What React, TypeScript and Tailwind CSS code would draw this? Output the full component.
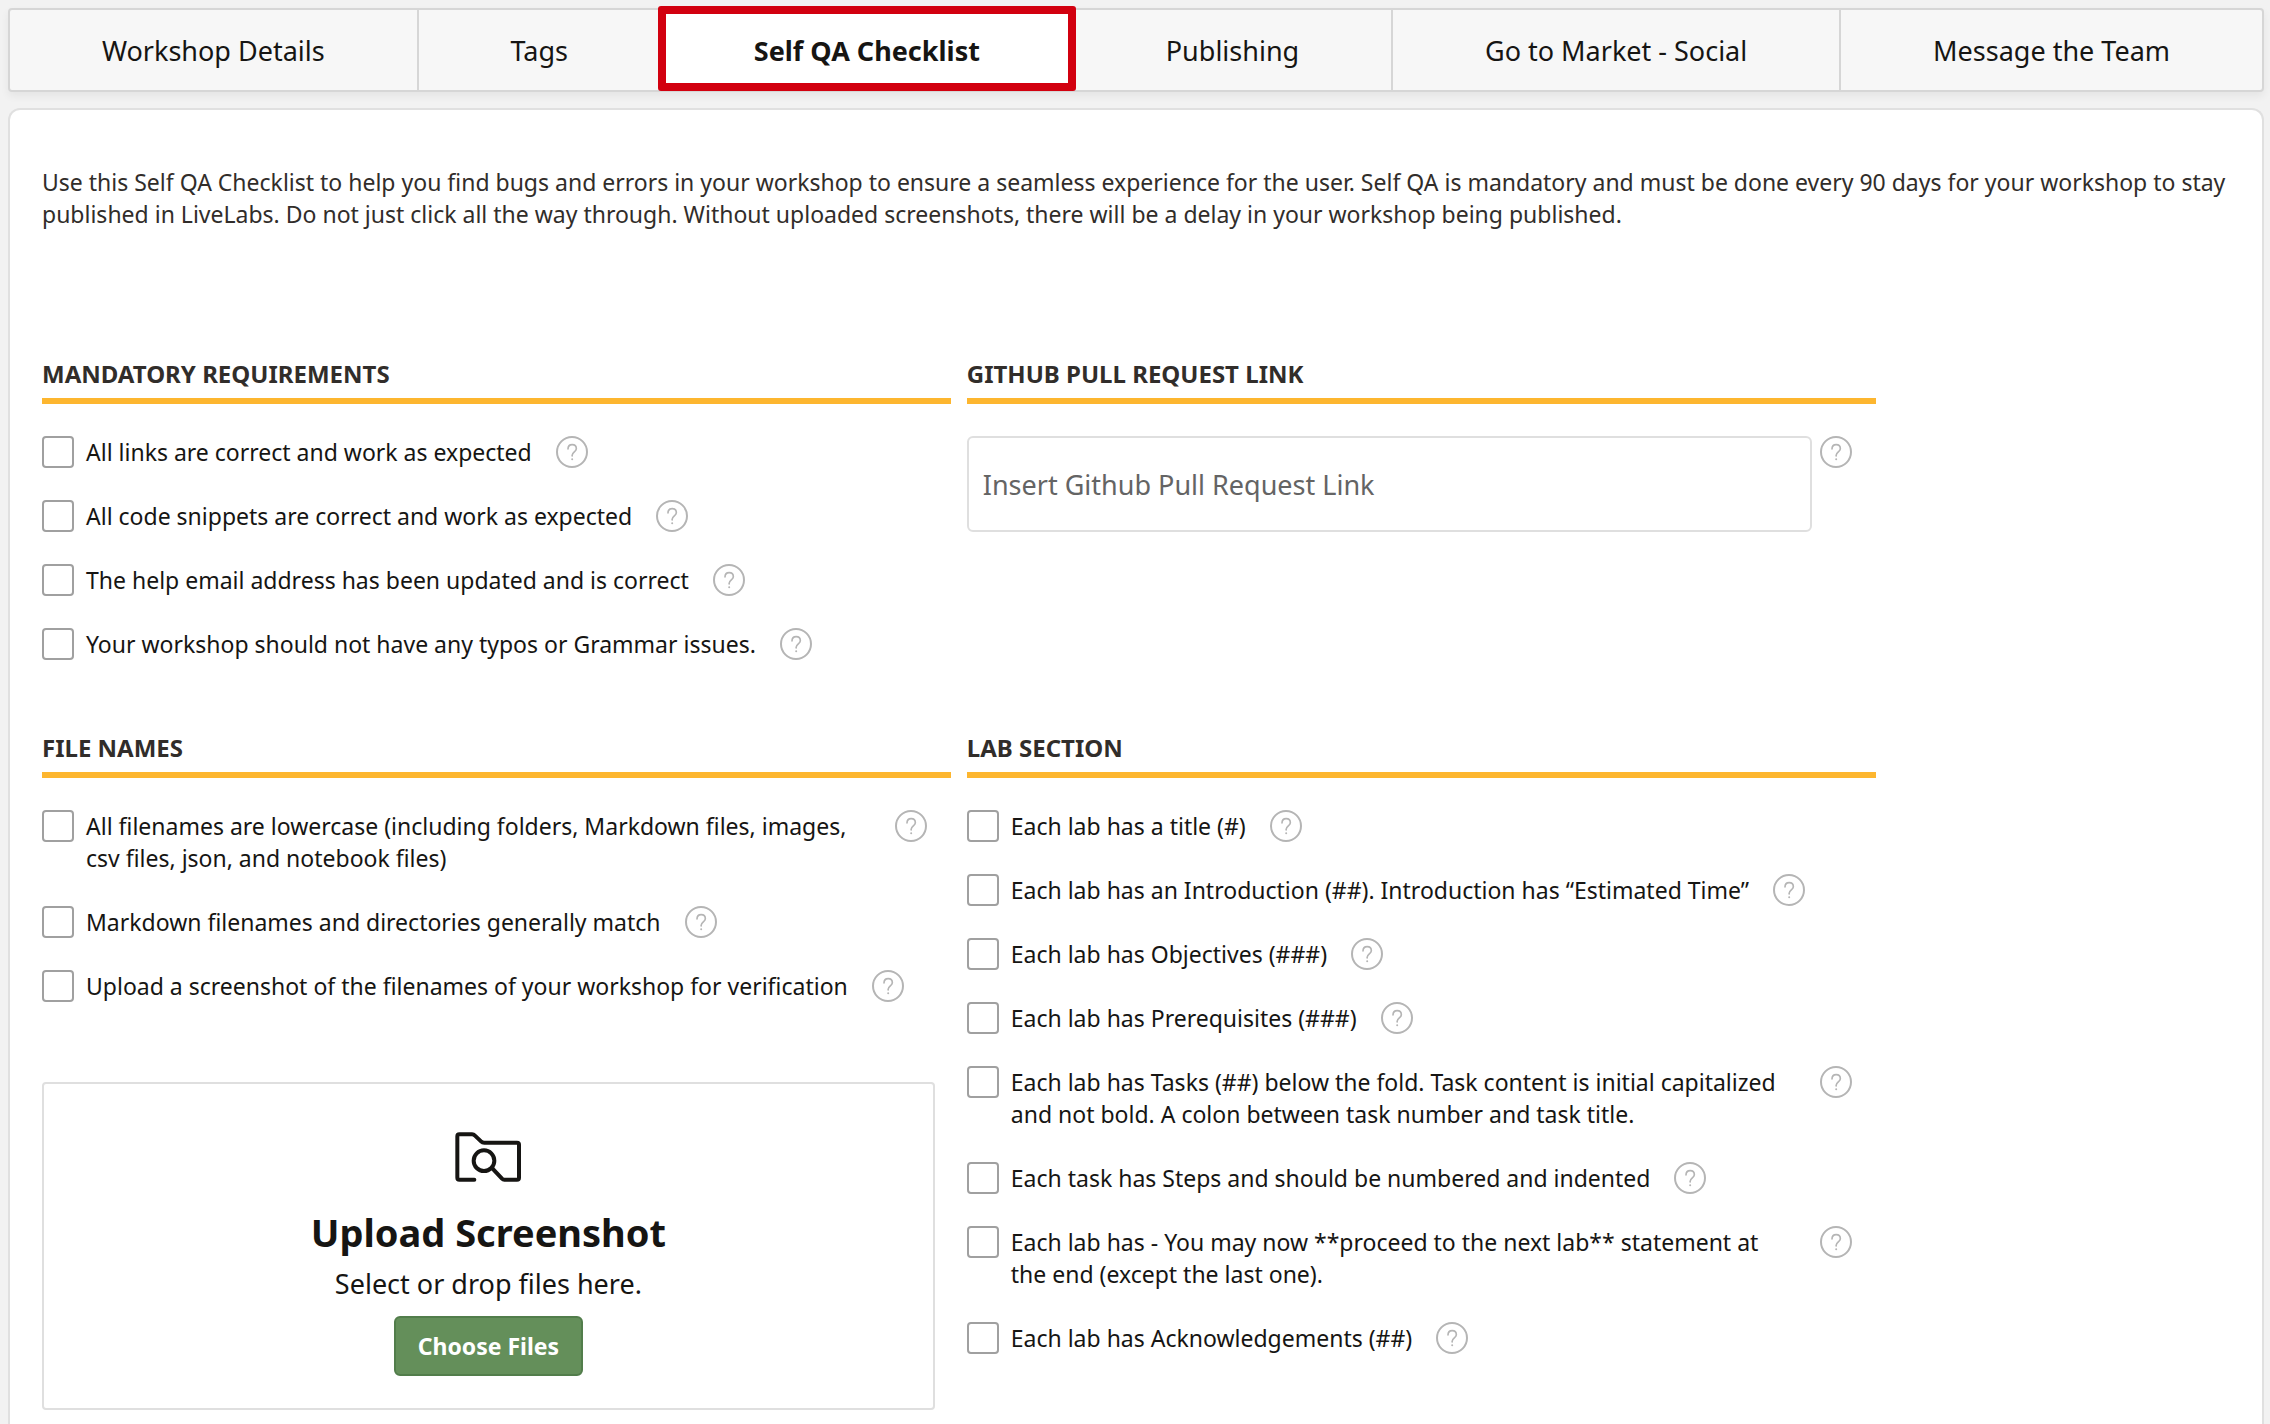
import React, { useId, useState } from "react";

const tabs = [
  "Workshop Details",
  "Tags",
  "Self QA Checklist",
  "Publishing",
  "Go to Market - Social",
  "Message the Team",
];

const mandatory = [
  "All links are correct and work as expected",
  "All code snippets are correct and work as expected",
  "The help email address has been updated and is correct",
  "Your workshop should not have any typos or Grammar issues.",
];

const fileNames = [
  "All filenames are lowercase (including folders, Markdown files, images, csv files, json, and notebook files)",
  "Markdown filenames and directories generally match",
  "Upload a screenshot of the filenames of your workshop for verification",
];

const labSection = [
  "Each lab has a title (#)",
  "Each lab has an Introduction (##). Introduction has “Estimated Time”",
  "Each lab has Objectives (###)",
  "Each lab has Prerequisites (###)",
  "Each lab has Tasks (##) below the fold. Task content is initial capitalized and not bold. A colon between task number and task title.",
  "Each task has Steps and should be numbered and indented",
  "Each lab has - You may now **proceed to the next lab** statement at the end (except the last one).",
  "Each lab has Acknowledgements (##)",
];

function HelpButton({ topic }: { topic: string }) {
  return (
    <button type="button" aria-label={`Help: ${topic}`} className="size-8 shrink-0 text-[#b5b5b5]">
      <svg viewBox="50 33 96 96" className="size-8" fill="none" stroke="currentColor" aria-hidden="true">
        <circle cx="98" cy="81" r="45" strokeWidth="6" />
        <path
          d="M86 72C86 64 91 59 98.500 59C106 59 111 64 111 71C111 80 98.500 81 98.500 91V93"
          strokeWidth="5"
          strokeLinecap="round"
        />
        <circle cx="98.500" cy="103" r="3" fill="currentColor" stroke="none" />
      </svg>
    </button>
  );
}

function FolderSearchIcon() {
  return (
    <svg
      viewBox="48 36 198 150"
      className="h-[50px] w-[66px]"
      fill="none"
      stroke="currentColor"
      strokeWidth="12"
      strokeLinecap="round"
      strokeLinejoin="round"
      aria-hidden="true"
    >
      <path d="M106 179H61Q55 179 55 173V49Q55 43 61 43H99Q104 43 108 47L126 64Q130 68 136 68H234Q240 68 240 74V173Q240 179 234 179H196Q192 179 189 176L160 145" />
      <circle cx="135" cy="122" r="31" />
    </svg>
  );
}

function CheckItem({ label }: { label: string }) {
  const id = useId();
  return (
    <li className="flex items-start pr-6">
      <input
        id={id}
        type="checkbox"
        className="mr-3 size-8 shrink-0 appearance-none rounded border-2 border-[#a0a0a0] bg-white checked:bg-[#648f5a]"
      />
      <label htmlFor={id} className="mr-6 text-[#161513]">
        {label}
      </label>
      <HelpButton topic={label} />
    </li>
  );
}

function Section({ title, children }: { title: string; children: React.ReactNode }) {
  return (
    <section>
      <h2 className="border-b-6 border-[#fdb62f] pb-2 text-2xl leading-8 font-bold text-[#312d2a]">{title}</h2>
      <div className="pt-8">{children}</div>
    </section>
  );
}

function CheckList({ items }: { items: string[] }) {
  return (
    <ul className="flex flex-col gap-8">
      {items.map((item) => (
        <CheckItem key={item} label={item} />
      ))}
    </ul>
  );
}

export default function App() {
  const [active, setActive] = useState("Self QA Checklist");
  return (
    <div className="flex min-h-screen flex-col gap-4 bg-[#f2f2f2] pt-2 pr-1.5 pl-2 font-['Noto_Sans','Open_Sans',sans-serif] text-[23px] leading-8 text-[#161513]">
      <nav
        role="tablist"
        className="flex h-[84px] rounded border-2 border-[#d6d6d6] bg-[#f7f7f7] text-[27px] shadow-[0_4px_8px_rgba(0,0,0,0.06)]"
      >
        {tabs.map((tab) => {
          const selected = tab === active;
          return (
            <button
              key={tab}
              type="button"
              role="tab"
              aria-selected={selected}
              onClick={() => setActive(tab)}
              className={`relative flex-auto border-r-2 border-[#d6d6d6] pt-0.5 text-center whitespace-nowrap last:border-r-0 ${
                selected ? "bg-white font-bold" : ""
              }`}
            >
              {tab}
              {selected && (
                <span className="absolute -top-1 -right-1 -bottom-px -left-1 rounded-[3px] border-8 border-[#d2000f] bg-white/0" />
              )}
            </button>
          );
        })}
      </nav>

      <main className="grow rounded-t-xl border-2 border-b-0 border-[#e0e0e0] bg-white px-8 pt-14 pb-3">
        <p className="text-[#312d2a]">
          Use this Self QA Checklist to help you find bugs and errors in your workshop to ensure a seamless experience
          for the user. Self QA is mandatory and must be done every 90 days for your workshop to stay published in
          LiveLabs. Do not just click all the way through. Without uploaded screenshots, there will be a delay in your
          workshop being published.
        </p>

        <div className="mt-32 grid w-[83.8%] grid-cols-2 gap-x-4 gap-y-18">
          <Section title="MANDATORY REQUIREMENTS">
            <CheckList items={mandatory} />
          </Section>

          <Section title="GITHUB PULL REQUEST LINK">
            <div className="flex items-start gap-2 pr-6">
              <input
                type="text"
                aria-label="Github Pull Request Link"
                placeholder="Insert Github Pull Request Link"
                className="h-24 min-w-0 grow rounded-md border-2 border-[#dfdfdf] px-3.5 text-[27px] placeholder:text-[#646464]"
              />
              <HelpButton topic="Github Pull Request Link" />
            </div>
          </Section>

          <Section title="FILE NAMES">
            <CheckList items={fileNames} />
            <div className="mt-20 mr-4 flex flex-col items-center rounded border-2 border-[#dfdfdf] pt-12 pb-8">
              <FolderSearchIcon />
              <h3 className="mt-6.5 text-[38px] leading-[48px] font-bold">Upload Screenshot</h3>
              <p className="mt-2 text-[27px] leading-10">Select or drop files here.</p>
              <button
                type="button"
                className="mt-3 h-[60px] rounded-md border-2 border-[#527d4b] bg-[#648f5a] px-[22px] font-bold text-white"
              >
                Choose Files
              </button>
            </div>
          </Section>

          <Section title="LAB SECTION">
            <CheckList items={labSection} />
          </Section>
        </div>
      </main>
    </div>
  );
}
